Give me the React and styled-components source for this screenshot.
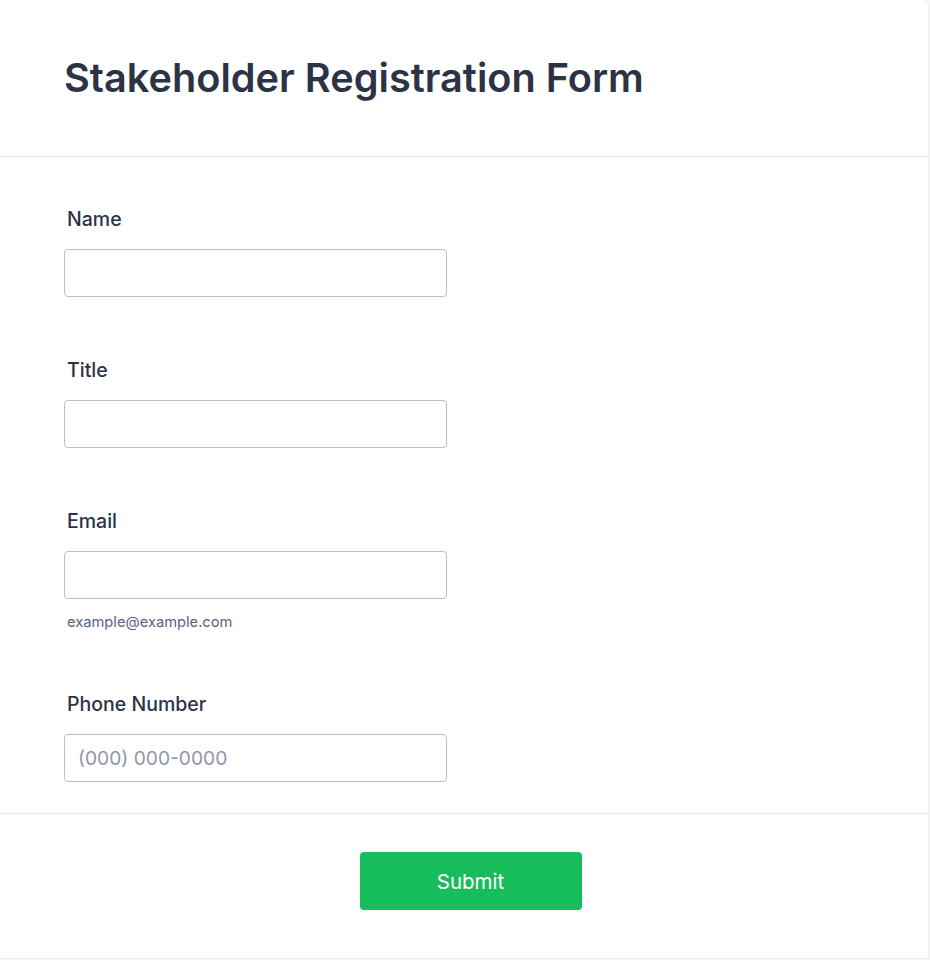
import styled, { createGlobalStyle } from "styled-components";

const GlobalStyle = createGlobalStyle`
  html, body {
    margin: 0;
    padding: 0;
    background: #f8f8fb;
    font-family: Inter, "Noto Sans", "Liberation Sans", sans-serif;
  }
  * {
    box-sizing: border-box;
  }
`;

const Card = styled.form`
  width: 929px;
  height: 959px;
  background: #ffffff;
  border-right: 1px solid #ececf1;
  border-bottom: 1px solid #ececf1;
  border-top-right-radius: 6px;
  display: flex;
  flex-direction: column;
`;

const Header = styled.header`
  padding: 55px 64px 55px;
  border-bottom: 1px solid #dfe0e6;
`;

const Title = styled.h1`
  margin: 0;
  font-size: 39.7px;
  line-height: 46px;
  font-weight: 600;
  color: #2c3345;
`;

const Fields = styled.div`
  padding: 51px 64px 31px;
  display: flex;
  flex-direction: column;
  gap: 62px;
  border-bottom: 1px solid #e6e6ec;
`;

const Field = styled.div`
  display: flex;
  flex-direction: column;
`;

const Label = styled.label`
  font-size: 19.5px;
  line-height: 22px;
  font-weight: 500;
  color: #2c3345;
  padding-left: 3px;
  margin-bottom: 19px;
`;

const Input = styled.input`
  width: 383px;
  height: 48px;
  border: 1px solid #b8bdc9;
  border-radius: 4px;
  padding: 0 13px;
  font-family: inherit;
  font-size: 19.2px;
  color: #2c3345;
  background: #fff;
  outline: none;
  &::placeholder {
    color: #8f96a3;
  }
`;

const Hint = styled.span`
  margin-top: 15px;
  padding-left: 3px;
  font-size: 14.7px;
  line-height: 17px;
  color: #57647e;
`;

const Footer = styled.div`
  padding: 38px 0 0 13px;
  display: flex;
  justify-content: center;
`;

const SubmitButton = styled.button`
  width: 222px;
  height: 58px;
  border: none;
  border-radius: 4px;
  background: #18bd5b;
  color: #ffffff;
  font-family: inherit;
  font-size: 20.5px;
  font-weight: 400;
  cursor: pointer;
`;

const fields = [
  { id: "name", label: "Name" },
  { id: "title", label: "Title" },
  { id: "email", label: "Email", hint: "example@example.com" },
  { id: "phone", label: "Phone Number", placeholder: "(000) 000-0000" },
];

export default function App() {
  return (
    <>
      <GlobalStyle />
      <Card onSubmit={(e) => e.preventDefault()}>
        <Header>
          <Title>Stakeholder Registration Form</Title>
        </Header>
        <Fields>
          {fields.map((f) => (
            <Field key={f.id}>
              <Label htmlFor={f.id}>{f.label}</Label>
              <Input id={f.id} type="text" placeholder={f.placeholder} />
              {f.hint && <Hint>{f.hint}</Hint>}
            </Field>
          ))}
        </Fields>
        <Footer>
          <SubmitButton type="submit">Submit</SubmitButton>
        </Footer>
      </Card>
    </>
  );
}
